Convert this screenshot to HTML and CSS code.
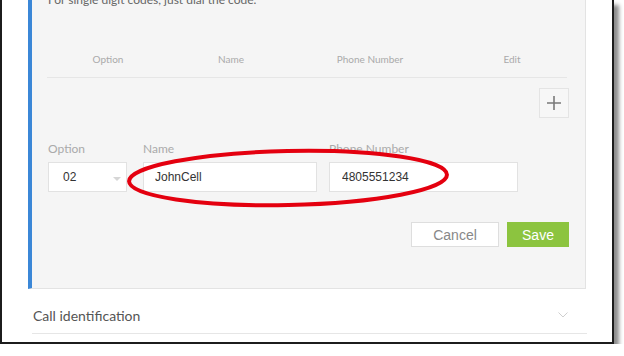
FILE: index.html
```html
<!DOCTYPE html>
<html lang="en">
<head>
  <meta charset="UTF-8">
  <title>Speed Dial</title>
  <link rel="stylesheet" href="styles.css">
</head>
<body>
  <div class="frame">
    <!-- Speed dial panel (expanded) -->
    <div class="panel">
      <p class="intro">For single digit codes, just dial the code.</p>

      <div class="table-head">
        <span>Option</span>
        <span>Name</span>
        <span>Phone Number</span>
        <span class="col-edit">Edit</span>
      </div>

      <div class="add-row">
        <button class="add-button" type="button" aria-label="Add">
          <svg width="14" height="14" viewBox="0 0 14 14"><path d="M7 0v14M0 7h14" stroke="#7a7a7a" stroke-width="1.6"/></svg>
        </button>
      </div>

      <div class="entry-form">
        <div class="field field-option">
          <label>Option</label>
          <div class="select-box">
            <span>02</span>
            <span class="select-arrow"></span>
          </div>
        </div>
        <div class="field field-name">
          <label>Name</label>
          <input type="text" value="JohnCell">
        </div>
        <div class="field field-phone">
          <label>Phone Number</label>
          <input type="text" value="4805551234">
        </div>

        <!-- callout drawn over the form -->
        <svg class="callout" width="330" height="66" viewBox="0 0 330 66">
          <ellipse cx="165" cy="33" rx="159" ry="27" fill="none" stroke="#e4000f" stroke-width="4" transform="rotate(-1.2 165 33)"/>
        </svg>
      </div>

      <div class="actions">
        <button class="btn-cancel" type="button">Cancel</button>
        <button class="btn-save" type="button">Save</button>
      </div>
    </div>

    <!-- Collapsed section -->
    <div class="section-row">
      <span>Call identification</span>
      <svg width="10" height="6" viewBox="0 0 10 6"><path d="M0.5 0.5L5 5L9.5 0.5" fill="none" stroke="#cfcfcf" stroke-width="1"/></svg>
    </div>
  </div>
</body>
</html>
```

FILE: styles.css
```css
/* General */
body {
  margin: 0;
  background: #ffffff;
  font-family: 'Lato', 'Open Sans', sans-serif;
}

.frame {
  display: flow-root;
  width: 610px;
  height: 342px;
  background: #ffffff;
  border: solid #1c1c1c;
  border-width: 0 2px 2px 2px;
  box-shadow: 5px 5px 4px rgba(0, 0, 0, 0.45);
  overflow: hidden;
}

/* Panel */
.panel {
  display: flow-root;
  margin-left: 26px;
  width: 558px;
  height: 289px;
  box-sizing: border-box;
  background: #f5f5f5;
  border-left: 4px solid #3b87d7;
  border-right: 1px solid #e3e3e3;
  border-bottom: 1px solid #e3e3e3;
  padding: 0 15px 0 15px;
}

.intro {
  margin: -8px 0 0 1px;
  height: 16px;
  line-height: 16px;
  font-size: 12px;
  color: #666;
}

/* Table header */
.table-head {
  display: grid;
  grid-template-columns: 122px 124px 154px 1fr;
  width: 520px;
  margin-top: 44px;
  padding-bottom: 11px;
  border-bottom: 1px solid #e6e6e6;
  line-height: 14px;
  font-size: 10px;
  color: #aaa;
  text-align: center;
}

.table-head .col-edit {
  padding-left: 10px;
}

.add-row {
  display: flex;
  justify-content: flex-end;
  margin-top: 10px;
  padding-right: 1px;
}

.add-button {
  width: 30px;
  height: 30px;
  padding: 0;
  display: flex;
  align-items: center;
  justify-content: center;
  background: #f7f7f7;
  border: 1px solid #e4e4e4;
}

/* Entry form */
.entry-form {
  position: relative;
  display: flex;
  margin-top: 24px;
  padding-left: 1px;
}

.field label {
  display: block;
  height: 14px;
  line-height: 14px;
  font-size: 12px;
  color: #aaa;
  margin-bottom: 6px;
}

.field-option { width: 79px; margin-right: 16px; }
.field-name { width: 174px; margin-right: 12px; }
.field-phone { width: 189px; }

.select-box,
.field input {
  box-sizing: border-box;
  width: 100%;
  height: 30px;
  margin: 0;
  background: #ffffff;
  border: 1px solid #e2e2e2;
  font-family: 'Liberation Sans', Arial, sans-serif;
  font-size: 12px;
  color: #333;
}

.select-box {
  display: flex;
  align-items: center;
  justify-content: space-between;
  padding: 0 5px 0 14px;
}

.select-arrow {
  width: 0;
  height: 0;
  border-left: 4px solid transparent;
  border-right: 4px solid transparent;
  border-top: 4px solid #d6d6d6;
  margin-top: 4px;
}

.field input {
  padding: 0 0 0 11px;
  outline: none;
}

.field-phone input {
  padding-left: 12px;
}

.callout {
  position: absolute;
  left: 76px;
  top: 3px;
}

/* Buttons */
.actions {
  display: flex;
  justify-content: flex-end;
  gap: 8px;
  margin-top: 30px;
  padding-right: 1px;
}

.actions button {
  height: 25px;
  padding: 0;
  font-family: 'Liberation Sans', Arial, sans-serif;
  font-size: 14px;
  cursor: pointer;
}

.btn-cancel {
  width: 88px;
  background: #ffffff;
  border: 1px solid #dedede;
  color: #888;
}

.btn-save {
  width: 62px;
  background: #8cc43f;
  border: 1px solid #8cc43f;
  color: #ffffff;
}

/* Collapsed section */
.section-row {
  display: flex;
  align-items: center;
  justify-content: space-between;
  margin-left: 30px;
  width: 555px;
  height: 45px;
  box-sizing: border-box;
  padding: 8px 19px 0 1px;
  border-bottom: 1px solid #e6e6e6;
  font-size: 14px;
  color: #555;
}
```
